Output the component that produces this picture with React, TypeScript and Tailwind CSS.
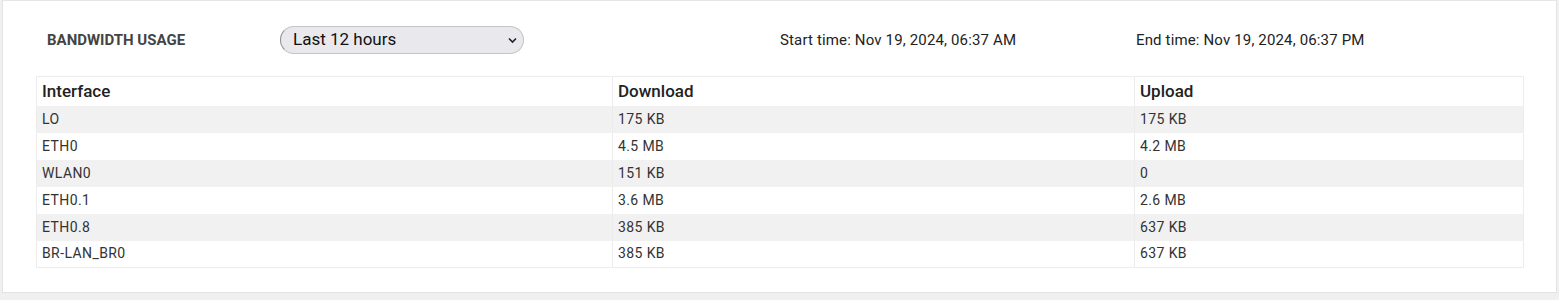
import { useState } from "react";

const rows = [
  { name: "LO", down: "175 KB", up: "175 KB" },
  { name: "ETH0", down: "4.5 MB", up: "4.2 MB" },
  { name: "WLAN0", down: "151 KB", up: "0" },
  { name: "ETH0.1", down: "3.6 MB", up: "2.6 MB" },
  { name: "ETH0.8", down: "385 KB", up: "637 KB" },
  { name: "BR-LAN_BR0", down: "385 KB", up: "637 KB" },
];

const App = () => {
  const [range, setRange] = useState("12");

  return (
    <div className="min-h-[300px] bg-[#f0f0f0] px-[2px] font-['Roboto',sans-serif] text-[#222]">
      <div className="h-[293px] border border-t-[#e6e6e6] border-[#e3e3e3] bg-white pl-[33px] pr-[33px]">
        <div className="flex h-[75px] items-center pt-[3px]">
          <div className="w-[244px] pl-[11px] text-[15px] font-bold text-[#444]">BANDWIDTH USAGE</div>
          <div className="relative h-[28px] w-[244px]">
            <select
              value={range}
              onChange={(e) => setRange(e.target.value)}
              className="h-full w-full appearance-none rounded-full border border-[#c4c4c8] border-l-[#8c8c8c] bg-[#e9e9ed] pl-[12px] text-[17px] text-[#111] outline-none"
            >
              <option value="1">Last hour</option>
              <option value="12">Last 12 hours</option>
              <option value="24">Last 24 hours</option>
            </select>
            <svg className="pointer-events-none absolute right-[7px] top-[11px]" width="9" height="7" viewBox="0 0 9 7">
              <path d="M1 1.5 L4.5 5 L8 1.5" fill="none" stroke="#222" strokeWidth="1.6" />
            </svg>
          </div>
          <div className="ml-[256px] w-[356px] text-[15px] tracking-[0.15px] text-[#222]">Start time: Nov 19, 2024, 06:37 AM</div>
          <div className="text-[15px] tracking-[0.15px] text-[#222]">End time: Nov 19, 2024, 06:37 PM</div>
        </div>

        <table className="w-[1488px] border-collapse border border-[#ececec] text-left">
          <thead>
            <tr className="h-[29px]">
              <th className="w-[576px] border-r border-[#ececec] pl-[5px] text-[17px] font-medium text-[#222]">Interface</th>
              <th className="w-[522px] border-r border-[#ececec] pl-[5px] text-[17px] font-medium text-[#222]">Download</th>
              <th className="pl-[5px] text-[17px] font-medium text-[#222]">Upload</th>
            </tr>
          </thead>
          <tbody>
            {rows.map((r, i) => (
              <tr key={r.name} className={i % 2 === 0 ? "h-[27px] bg-[#f1f1f1]" : "h-[27px] bg-white"}>
                <td className="border-r border-[#ececec] pl-[5px] text-[14px] tracking-[0.4px] text-[#333]">{r.name}</td>
                <td className="border-r border-[#ececec] pl-[5px] text-[14px] tracking-[0.4px] text-[#333]">{r.down}</td>
                <td className="pl-[5px] text-[14px] tracking-[0.4px] text-[#333]">{r.up}</td>
              </tr>
            ))}
          </tbody>
        </table>
      </div>
    </div>
  );
};

export default App;
